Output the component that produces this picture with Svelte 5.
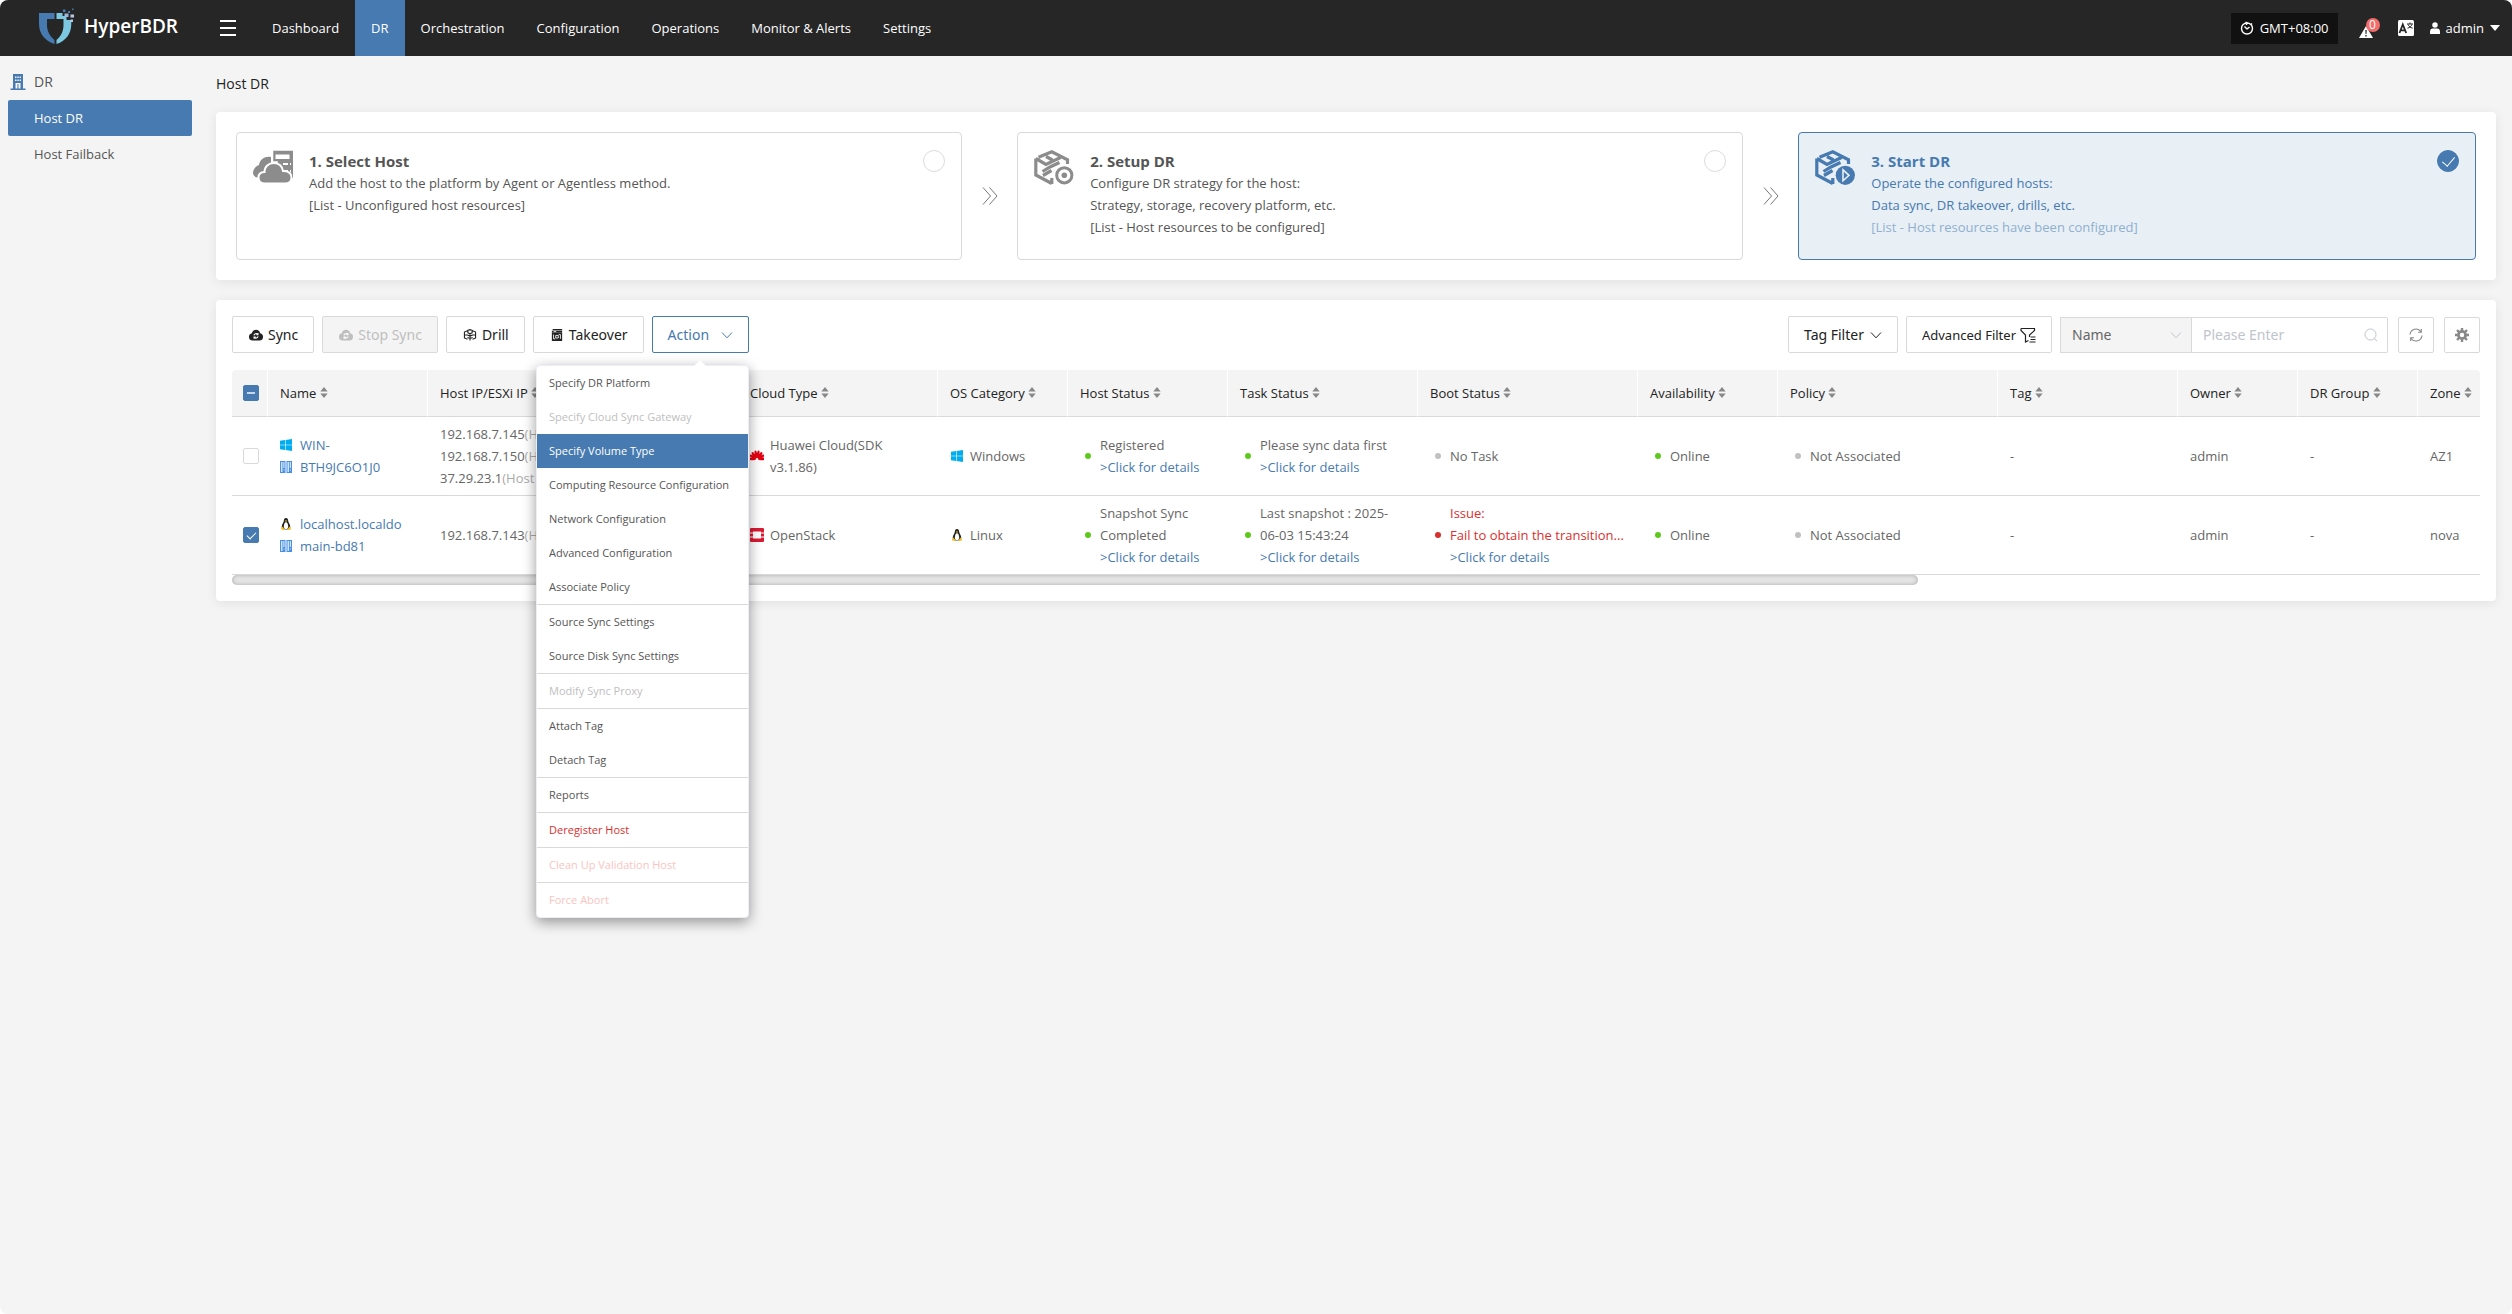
<script lang="ts">
	type Status = { color: string; lines: string[]; link?: boolean; error?: boolean };

	const navItems = [
		'Dashboard',
		'DR',
		'Orchestration',
		'Configuration',
		'Operations',
		'Monitor & Alerts',
		'Settings'
	];
	const sideItems = ['Host DR', 'Host Failback'];

	const steps = [
		{
			title: '1. Select Host',
			icon: 'cloud',
			lines: ['Add the host to the platform by Agent or Agentless method.'],
			list: '[List - Unconfigured host resources]'
		},
		{
			title: '2. Setup DR',
			icon: 'setup',
			lines: ['Configure DR strategy for the host:', 'Strategy, storage, recovery platform, etc.'],
			list: '[List - Host resources to be configured]'
		},
		{
			title: '3. Start DR',
			icon: 'start',
			lines: ['Operate the configured hosts:', 'Data sync, DR takeover, drills, etc.'],
			list: '[List - Host resources have been configured]'
		}
	];

	const menuGroups = [
		[
			{ label: 'Specify DR Platform' },
			{ label: 'Specify Cloud Sync Gateway', disabled: true },
			{ label: 'Specify Volume Type', active: true },
			{ label: 'Computing Resource Configuration' },
			{ label: 'Network Configuration' },
			{ label: 'Advanced Configuration' },
			{ label: 'Associate Policy' }
		],
		[{ label: 'Source Sync Settings' }, { label: 'Source Disk Sync Settings' }],
		[{ label: 'Modify Sync Proxy', disabled: true }],
		[{ label: 'Attach Tag' }, { label: 'Detach Tag' }],
		[{ label: 'Reports' }],
		[{ label: 'Deregister Host', danger: true }],
		[{ label: 'Clean Up Validation Host', danger: true, disabled: true }],
		[{ label: 'Force Abort', danger: true, disabled: true }]
	] as { label: string; disabled?: boolean; active?: boolean; danger?: boolean }[][];

	const columns = [
		{ label: 'Name', cls: 'c-name' },
		{ label: 'Host IP/ESXi IP', cls: 'c-ip' },
		{ label: 'Cloud Type', cls: 'c-cloud' },
		{ label: 'OS Category', cls: 'c-os' },
		{ label: 'Host Status', cls: 'c-host' },
		{ label: 'Task Status', cls: 'c-task' },
		{ label: 'Boot Status', cls: 'c-boot' },
		{ label: 'Availability', cls: 'c-avail' },
		{ label: 'Policy', cls: 'c-policy' },
		{ label: 'Tag', cls: 'c-tag' },
		{ label: 'Owner', cls: 'c-owner' },
		{ label: 'DR Group', cls: 'c-group' },
		{ label: 'Zone', cls: 'c-zone' }
	];

	const petals = [-88, -62, -37, -12, 12, 37, 62, 88];

	let rows = $state([
		{
			checked: false,
			name: ['WIN-', 'BTH9JC6O1J0'],
			ips: ['192.168.7.145', '192.168.7.150', '37.29.23.1'],
			cloud: 'Huawei Cloud(SDK v3.1.86)',
			cloudIcon: 'huawei',
			os: 'Windows',
			status: [
				{ color: 'green', lines: ['Registered'], link: true },
				{ color: 'green', lines: ['Please sync data first'], link: true },
				{ color: 'gray', lines: ['No Task'] },
				{ color: 'green', lines: ['Online'] },
				{ color: 'gray', lines: ['Not Associated'] }
			] as Status[],
			rest: ['-', 'admin', '-', 'AZ1']
		},
		{
			checked: true,
			name: ['localhost.localdo', 'main-bd81'],
			ips: ['192.168.7.143'],
			cloud: 'OpenStack',
			cloudIcon: 'openstack',
			os: 'Linux',
			status: [
				{ color: 'green', lines: ['Snapshot Sync', 'Completed'], link: true },
				{ color: 'green', lines: ['Last snapshot : 2025-', '06-03 15:43:24'], link: true },
				{
					color: 'red',
					lines: ['Issue:', 'Fail to obtain the transition...'],
					link: true,
					error: true
				},
				{ color: 'green', lines: ['Online'] },
				{ color: 'gray', lines: ['Not Associated'] }
			] as Status[],
			rest: ['-', 'admin', '-', 'nova']
		}
	]);

	let step = $state(2);
	let menuOpen = $state(true);
	let keyword = $state('');

	let allChecked = $derived(rows.every((r) => r.checked));
	let someChecked = $derived(rows.some((r) => r.checked) && !allChecked);

	function toggleAll() {
		const next = !allChecked;
		rows.forEach((r) => (r.checked = next));
	}
</script>

{#snippet osIcon(os: string)}
	{#if os === 'Windows'}
		<svg class="os" viewBox="0 0 12 12" fill="#00adef">
			<path d="M0 1.700 5 1v4.700H0zM5.600.9 12 0v5.700H5.600zM0 6.300h5V11l-5-.7zM5.600 6.300H12V12l-6.400-.9z" />
		</svg>
	{:else}
		<svg class="os" viewBox="0 0 12 12">
			<path fill="#222" d="M6 0c1.500 0 2.100 1.100 2.100 2.500C8.200 4.500 10.300 6 10.300 9c0 1.500-1 2.500-4.300 2.500S1.700 10.500 1.700 9c0-3 2.100-4.500 2.200-6.500C3.900 1.100 4.500 0 6 0z" />
			<path fill="#fff" d="M6 4.200c1.200 0 2.200 2 2.200 4.300S7.200 11 6 11s-2.200-.3-2.200-2.500S4.800 4.200 6 4.200z" />
			<path fill="#f5b80f" d="M4.800 2.700 6 2.300l1.200.4L6 3.900zM2.200 8.400l2.500 2.500-.8 1.100L.8 11.200zM9.800 8.400l-2.500 2.500.8 1.100 3.100-.8z" />
		</svg>
	{/if}
{/snippet}

{#snippet cloudSync()}
	<svg class="ico" viewBox="0 0 16 14">
		<path fill="currentColor" d="M8 1a5 5 0 0 1 4.800 4A4.300 4.300 0 0 1 12 13.500H4A4.300 4.300 0 0 1 3.200 5 5 5 0 0 1 8 1z" />
		<path class="hole" fill="none" stroke-width="1.200" d="M5.600 7.500A2.500 2.500 0 0 1 10 6.300M10.400 8.500A2.500 2.500 0 0 1 6 9.700M10.300 4.700v1.900H8.400M5.700 11.300V9.400h1.900" />
	</svg>
{/snippet}

{#snippet chevron()}
	<svg class="chev" viewBox="0 0 12 12">
		<path fill="none" stroke="currentColor" d="M1 3.500 6 8.800l5-5.300" />
	</svg>
{/snippet}

{#snippet cube()}
	<path d="M1.800 8.500V25l16 8.500M1.800 8.500 12 14.500 26.500 7.500M4.500 7.200 17.800 1.800 33.500 9.800V14M12 6.500l6.500 3.500M8.500 21.500 16 17l9.500-4.500M9 25.500l8.500-5M17.800 34v-6" />
{/snippet}

{#snippet statusCell(s: Status)}
	<div class="status" class:error={s.error}>
		<i class="dot {s.color}"></i>
		<div>
			{#each s.lines as line}<div class="line">{line}</div>{/each}
			{#if s.link}<a class="line" href="#details">&gt;Click for details</a>{/if}
		</div>
	</div>
{/snippet}

<div class="app">
	<header>
		<a class="logo" href="#home">
			<svg viewBox="0 0 36 38">
				<path fill="#467ab0" d="M0 6h15.500v6H8v6c0 6 3 11.500 7.500 15v4C6 34 0 26.500 0 17z" />
				<path fill="#7cc8e0" d="M17.500 6h6v3h4v4h4.800v4c0 9.500-5.300 17-14.800 20v-4c4.500-3.500 7-9 7-15v-6h-7z" />
				<path fill="#7cc8e0" d="M25 13h4v3h-4z" />
				<path fill="#9bb6d6" d="M25.500 6.500h4v3.500h-4z" />
				<path fill="#b9cbe2" d="M31.500 7.500H35v3h-3.500zM31.500 12.500h2.500V15h-2.500z" />
				<path fill="#467ab0" d="M24 2.500h2.500V5H24zM29 4h2v2h-2zM33 1.500h1.500V3H33z" />
			</svg>
			<span>HyperBDR</span>
		</a>
		<button class="burger" aria-label="Toggle menu"><i></i><i></i><i></i></button>
		<nav>
			{#each navItems as item}
				<a href="#{item}" class:active={item === 'DR'}>{item}</a>
			{/each}
		</nav>
		<div class="tools">
			<button class="tz">
				<svg viewBox="0 0 14 14" fill="none" stroke="#fff" stroke-width="1.400">
					<circle cx="7" cy="7.500" r="5.500" />
					<path d="M7 8 4.500 5.500M7 8l2.500-2M5.500 1l2 1.200-1.500 1.500M11 2.500l1 1" />
				</svg>
				GMT+08:00
			</button>
			<button class="alert" aria-label="Alerts">
				<svg viewBox="0 0 14 12">
					<path fill="#fff" d="M7 0l7 12H0z" />
					<path fill="#262626" d="M6.300 4h1.400l-.2 4h-1zM6.300 9h1.400v1.400H6.300z" />
				</svg>
				<span class="badge">0</span>
			</button>
			<button class="lang" aria-label="Language">
				<svg viewBox="0 0 16 16">
					<rect width="16" height="16" rx="1.500" fill="#fff" />
					<path fill="none" stroke="#262626" stroke-width="1.800" d="M1.500 13 4.800 4.500 8.200 13M2.800 10.300H7" />
					<path fill="none" stroke="#262626" d="M9 4h6M12 2.500V4M14 4.500c-.8 2-2.500 3-4.500 3.700M10 4.500c.8 2 2.500 3 4.700 3.700" />
				</svg>
			</button>
			<button class="user">
				<svg viewBox="0 0 11 13" fill="#fff">
					<circle cx="5.500" cy="3.200" r="3" />
					<path d="M0 13v-2.500C0 8 1.500 7 3 7h5c1.500 0 3 1 3 3.500V13z" />
				</svg>
				admin
				<i class="caret"></i>
			</button>
		</div>
	</header>

	<div class="body">
		<aside>
			<div class="side-title">
				<svg viewBox="0 0 16 16">
					<path fill="#467ab0" fill-rule="evenodd" d="M3 0h10v14.500h2.500V16H.5v-1.500H3zM5 2.500V4h1.500V2.500zm2.300 0V4h1.500V2.500zm2.300 0V4H11V2.500zM5 5.500V7h1.500V5.500zm2.300 0V7h1.500V5.500zm2.300 0V7H11V5.500zM5.500 9v5.500h2V10h1v4.500h2V9z" />
				</svg>
				DR
			</div>
			{#each sideItems as item, i}
				<a href="#{item}" class:active={i === 0}>{item}</a>
			{/each}
		</aside>

		<main>
			<h1>Host DR</h1>

			<section class="panel steps">
				{#each steps as s, i}
					{#if i > 0}
						<svg class="next" viewBox="0 0 16 18" fill="none" stroke="#777">
							<path d="M1 .5 8.500 9 1 17.500M7.500.5 15 9l-7.500 8.500" />
						</svg>
					{/if}
					<label class="step" class:selected={step === i}>
						{#if s.icon === 'cloud'}
							<svg class="step-icon" viewBox="0 0 40 36">
								<path fill="#8c8c8c" d="M18 7c-6-1-11 2-12 8-4 1.500-6 5-6 8 0 2 1.500 4 4.500 4.500L18 20z" />
								<path fill="#8c8c8c" stroke="#fff" stroke-width="1.500" d="M19.500 0H42v29H30l-6-8V12h-4.500z" />
								<path fill="#fff" d="M22.500 4.500h14V9h-14zM30 13h8v2h-8zM30 20h8v2h-8z" />
								<path fill="#8c8c8c" d="M35 13h2v2h-2zM35 20h2v2h-2z" />
								<path fill="#8c8c8c" stroke="#fff" stroke-width="2" d="M21 13c5 0 8.500 3.500 9 8 4.500 0 8.500 1.500 8.500 6.500 0 4-3 6-6.500 6H12c-3.500 0-6.500-2-6.500-6 0-3.500 2.500-5.500 6-5.500 0-5.500 4-9 9.500-9z" />
							</svg>
						{:else}
							<svg class="step-icon" viewBox="0 0 40 36">
								<g fill="none" stroke={s.icon === 'start' ? '#467ab0' : '#8c8c8c'} stroke-width="3.200">
									{@render cube()}
								</g>
								{#if s.icon === 'start'}
									<circle cx="30.300" cy="25.300" r="11" fill="#e8eff5" />
									<circle cx="30.300" cy="25.300" r="9.600" fill="#467ab0" />
									<path fill="none" stroke="#e8eff5" stroke-width="1.600" d="M28 19.800v11l6-5.500z" />
								{:else}
									<circle cx="30.300" cy="25.300" r="11" fill="#fff" />
									<circle cx="30.300" cy="25.300" r="7.600" fill="none" stroke="#8c8c8c" stroke-width="3" />
									<circle cx="30.300" cy="25.300" r="2.800" fill="#8c8c8c" />
								{/if}
							</svg>
						{/if}
						<span class="step-text">
							<strong>{s.title}</strong>
							{#each s.lines as line}<span>{line}</span>{/each}
							<span class="list">{s.list}</span>
						</span>
						<input type="radio" name="step" value={i} bind:group={step} />
					</label>
				{/each}
			</section>

			<section class="panel list-panel">
				<div class="toolbar">
					<button class="btn">{@render cloudSync()}Sync</button>
					<button class="btn" disabled>{@render cloudSync()}Stop Sync</button>
					<button class="btn">
						<svg class="ico" viewBox="0 0 16 14" fill="none" stroke="currentColor" stroke-width="1.300">
							<path d="M5 2 1.500 3.500v7L5 12M11 2l3.500 1.500v7L11 12M5.500 1.500 8 .7l2.500.8v3L8 5.500 5.500 4.500zM5 7l3 1.200L11 7M5 10l3 1 3-1M8 5.500V13.300M1.500 7H5M11 7h3.500" />
						</svg>Drill
					</button>
					<button class="btn">
						<svg class="ico" viewBox="0 0 16 14">
							<path fill="currentColor" d="M3 0h11v1.500H3zM2 2h12v2H2zM2 4.500h12V14H2z" />
							<path fill="none" stroke="#fff" d="M4 6.500v5h2M12 11.500v-5h-2M6.500 7.500h3v3h-3zM4 3h3" />
						</svg>Takeover
					</button>
					<div class="dropdown">
						<button class="btn primary" aria-expanded={menuOpen} onclick={() => (menuOpen = !menuOpen)}>
							Action {@render chevron()}
						</button>
						{#if menuOpen}
							<div class="menu" role="menu">
								{#each menuGroups as group}
									<div class="group">
										{#each group as item}
											<button
												role="menuitem"
												class:active={item.active}
												class:danger={item.danger}
												disabled={item.disabled}>{item.label}</button
											>
										{/each}
									</div>
								{/each}
							</div>
						{/if}
					</div>

					<div class="filters">
						<button class="btn">Tag Filter {@render chevron()}</button>
						<button class="btn adv">
							Advanced Filter
							<svg class="funnel" viewBox="0 0 16 16" fill="none" stroke="currentColor" stroke-width="1.200">
								<path d="M1 1.500h13.500v2L9.500 8v2M1 1.500v2L5.500 8v7l3-1.500M10.500 10h5M10.500 12.500h5M9.500 15h6" />
							</svg>
						</button>
						<div class="search">
							<div class="select">
								<select aria-label="Search field"><option>Name</option></select>
								{@render chevron()}
							</div>
							<div class="input">
								<input type="text" placeholder="Please Enter" aria-label="Keyword" bind:value={keyword} />
								<svg viewBox="0 0 14 14" fill="none" stroke="#c0c4cc">
									<circle cx="6.500" cy="6.500" r="5.500" />
									<path d="m10 10.500 3 2.500" />
								</svg>
							</div>
						</div>
						<button class="btn square" aria-label="Refresh">
							<svg viewBox="0 0 14 14" fill="none" stroke="#888" stroke-width="1.100">
								<path d="M1 6.500A6 6 0 0 1 12 3.800M13 7.500A6 6 0 0 1 2 10.200M12.300 1v3.200H9M1.700 13V9.800H5" />
							</svg>
						</button>
						<button class="btn square" aria-label="Column settings">
							<svg viewBox="0 0 14 14">
								<circle cx="7" cy="7" r="3.600" fill="none" stroke="#888" stroke-width="2.800" />
								<path stroke="#888" stroke-width="2.400" d="M7 0v2.500M7 11.500V14M0 7h2.500M11.500 7H14M2 2l2 2M10 10l2 2M2 12l2-2M10 4l2-2" />
							</svg>
						</button>
					</div>
				</div>

				<div class="table-wrap">
					<table>
						<colgroup>
							<col class="c-check" />
							{#each columns as c}<col class={c.cls} />{/each}
						</colgroup>
						<thead>
							<tr>
								<th class="check">
									<input
										type="checkbox"
										aria-label="Select all"
										checked={allChecked}
										indeterminate={someChecked}
										onchange={toggleAll}
									/>
								</th>
								{#each columns as c}
									<th>
										{c.label}
										<svg class="sort" viewBox="0 0 8 12" fill="#888">
											<path d="M4 0l4 5H0zM0 7h8l-4 5z" />
										</svg>
									</th>
								{/each}
							</tr>
						</thead>
						<tbody>
							{#each rows as row}
								<tr>
									<td class="check">
										<input type="checkbox" aria-label="Select {row.name.join('')}" bind:checked={row.checked} />
									</td>
									<td>
										<div class="host">
											<span class="host-icons">
												{@render osIcon(row.os)}
												<svg class="os" viewBox="0 0 12 12">
													<path fill="#4a90e2" d="M0 0h5.500v12H0zM6.500 0H12v12H6.500z" />
													<path fill="#cfe3fa" d="M1 1h1.500v10H1zM3.300 1h1.200v6H3.300zM7.500 1H9v10H7.500zM9.800 1H11v6H9.800zM3.500 8.500h1v1h-1zM10 8.500h1v1h-1z" />
												</svg>
											</span>
											<a href="#host">{row.name[0]}<br />{row.name[1]}</a>
										</div>
									</td>
									<td>
										{#each row.ips as ip}<div class="line">{ip}<span class="muted">(Host IP)</span></div>{/each}
									</td>
									<td>
										<div class="with-icon">
											{#if row.cloudIcon === 'huawei'}
												<svg viewBox="0 0 14 14" fill="#e60012">
													{#each petals as angle}
														<ellipse cx="7" cy="5.200" rx="1.300" ry="3.800" transform="rotate({angle} 7 10)" />
													{/each}
												</svg>
											{:else}
												<svg viewBox="0 0 14 14">
													<path fill="#da1a32" fill-rule="evenodd" d="M1 0h12q1 0 1 1v3.500h-3V3.500H3v1H0V1q0-1 1-1zM0 5.500h3v3H0zM11 5.500h3v3h-3zM0 9.500h3v1h8v-1h3V13q0 1-1 1H1q-1 0-1-1z" />
													<path fill="#ee8a97" d="M0 4.500h3v1H0zM11 4.500h3v1h-3zM0 8.500h3v1H0zM11 8.500h3v1h-3z" />
												</svg>
											{/if}
											<span>{row.cloud}</span>
										</div>
									</td>
									<td>
										<div class="with-icon">{@render osIcon(row.os)}<span>{row.os}</span></div>
									</td>
									{#each row.status as s}<td>{@render statusCell(s)}</td>{/each}
									{#each row.rest as text}<td>{text}</td>{/each}
								</tr>
							{/each}
						</tbody>
					</table>
				</div>
				<div class="scroll"><i></i></div>
			</section>
		</main>
	</div>
</div>

<style>
	:global(body) {
		background: #fff;
	}
	.app {
		--blue: #467ab0;
		--border: #d9d9d9;
		min-height: 100vh;
		background: #f4f4f4;
		border-radius: 8px;
		overflow: hidden;
		font: 13px/22px 'Segoe UI', 'Open Sans', 'Noto Sans', sans-serif;
		color: #555;
	}
	.app * {
		box-sizing: border-box;
	}
	button,
	input,
	select {
		font: inherit;
		color: inherit;
	}
	button {
		background: none;
		border: 0;
		padding: 0;
		white-space: nowrap;
		cursor: pointer;
	}
	button:disabled {
		cursor: not-allowed;
	}
	a {
		color: var(--blue);
		text-decoration: none;
	}
	svg {
		flex: none;
	}

	header {
		display: flex;
		height: 56px;
		background: #262626;
		color: #fff;
	}
	.logo {
		display: flex;
		align-items: center;
		gap: 9px;
		width: 181px;
		padding: 0 0 4px 39px;
		font-size: 19px;
		font-weight: 600;
		color: #fff;
	}
	.logo svg {
		width: 36px;
		height: 38px;
	}
	.burger {
		display: flex;
		flex-direction: column;
		justify-content: center;
		gap: 5px;
		width: 16px;
		margin: 0 20px 0 39px;
	}
	.burger i {
		width: 16px;
		height: 2px;
		background: #fff;
	}
	nav {
		display: flex;
	}
	nav a {
		padding: 0 16px;
		line-height: 56px;
		color: #fff;
	}
	nav a.active {
		background: var(--blue);
	}
	.tools {
		display: flex;
		align-items: center;
		margin-left: auto;
		padding-right: 12px;
	}
	.tz {
		display: flex;
		align-items: center;
		gap: 6px;
		height: 31px;
		padding: 0 9px;
		background: #111;
	}
	.tz svg {
		width: 14px;
		height: 14px;
	}
	.alert {
		position: relative;
		display: flex;
		margin: 8px 25px 0 21px;
	}
	.alert svg {
		width: 14px;
		height: 12px;
	}
	.badge {
		position: absolute;
		right: -7px;
		bottom: 6px;
		width: 14px;
		height: 14px;
		border-radius: 50%;
		background: #f56c6c;
		font-size: 12px;
		line-height: 14px;
		text-align: center;
	}
	.lang svg {
		display: block;
		width: 16px;
		height: 16px;
	}
	.user {
		display: flex;
		align-items: center;
		gap: 6px;
		margin-left: 16px;
	}
	.user svg {
		width: 10px;
		height: 12px;
	}
	.caret {
		border: 5px solid transparent;
		border-top: 6px solid #fff;
		border-bottom: 0;
	}

	.body {
		display: flex;
	}
	aside {
		display: flex;
		flex-direction: column;
		width: 200px;
		padding: 8px 8px 0;
	}
	.side-title {
		display: flex;
		align-items: center;
		gap: 8px;
		height: 36px;
		padding-left: 2px;
		font-size: 14px;
	}
	.side-title svg {
		width: 16px;
		height: 16px;
	}
	aside a {
		padding-left: 26px;
		border-radius: 2px;
		line-height: 36px;
		color: #555;
	}
	aside a.active {
		background: var(--blue);
		color: #fff;
	}

	main {
		flex: 1;
		min-width: 0;
		padding: 0 16px;
	}
	h1 {
		margin: 0;
		font-size: 14px;
		font-weight: 400;
		line-height: 56px;
		color: #222;
	}
	.panel {
		border-radius: 4px;
		background: #fff;
		box-shadow: 0 2px 12px rgba(0, 0, 0, 0.08);
	}
	.steps {
		display: grid;
		grid-template-columns: 15fr 55px 15fr 55px 14fr;
		align-items: center;
		margin-bottom: 20px;
		padding: 20px;
	}
	.next {
		width: 16px;
		height: 18px;
		justify-self: center;
	}
	.step {
		display: flex;
		height: 128px;
		padding: 17px 16px 0;
		border: 1px solid var(--border);
		border-radius: 4px;
		cursor: pointer;
	}
	.step-icon {
		width: 40px;
		height: 36px;
	}
	.step-text {
		display: flex;
		flex: 1;
		flex-direction: column;
		padding-left: 16px;
	}
	.step-text strong {
		font-size: 15px;
	}
	.step.selected {
		border-color: var(--blue);
		background: #e8eff5;
		color: var(--blue);
	}
	.selected .list {
		color: #8fb0d0;
	}
	.step input {
		display: grid;
		place-items: center;
		appearance: none;
		width: 22px;
		height: 22px;
		margin: 0;
		border: 1px solid #dcdcdc;
		border-radius: 50%;
		background: #fff;
	}
	.step input:checked {
		border-color: var(--blue);
		background: var(--blue);
	}
	.step input:checked::after {
		content: '';
		width: 6px;
		height: 11px;
		margin-bottom: 3px;
		border: solid #fff;
		border-width: 0 1px 1px 0;
		transform: rotate(40deg);
	}

	.list-panel {
		padding: 16px;
	}
	.toolbar {
		display: flex;
		align-items: center;
		gap: 8px;
		margin-bottom: 17px;
	}
	.btn {
		display: flex;
		align-items: center;
		height: 37px;
		padding: 0 15px;
		border: 1px solid var(--border);
		border-radius: 2px;
		background: #fff;
		font-family: 'Noto Sans', sans-serif;
		font-size: 14px;
		color: #222;
	}
	.btn:disabled {
		background: #f4f4f4;
		color: #bfbfbf;
	}
	.hole {
		stroke: #fff;
	}
	.btn.primary {
		border-color: var(--blue);
		color: var(--blue);
	}
	.ico {
		width: 16px;
		height: 12px;
		margin-right: 4px;
	}
	.chev {
		width: 12px;
		height: 12px;
	}
	.primary .chev {
		margin-left: 12px;
	}
	.dropdown {
		position: relative;
	}
	.menu {
		position: absolute;
		z-index: 5;
		top: 49px;
		right: 0;
		width: 213px;
		border: 1px solid #ebeef5;
		border-radius: 4px;
		background: #fff;
		box-shadow: 0 4px 14px rgba(0, 0, 0, 0.4);
	}
	.menu::before {
		content: '';
		position: absolute;
		top: -6px;
		right: 42px;
		border: 6px solid transparent;
		border-top: 0;
		border-bottom-color: #fff;
	}
	.group + .group {
		border-top: 1px solid var(--border);
	}
	.menu button {
		display: block;
		width: 100%;
		height: 34px;
		padding-left: 12px;
		font-size: 11px;
		text-align: left;
	}
	.menu button:disabled {
		color: #c0c0c0;
	}
	.menu button.active {
		background: var(--blue);
		color: #fff;
	}
	.menu button.danger {
		color: #d9302f;
	}
	.menu button.danger:disabled {
		color: #fbc4bf;
	}

	.filters {
		display: flex;
		align-items: center;
		gap: 8px;
		margin-left: auto;
	}
	.filters .chev {
		margin-left: 6px;
	}
	.btn.adv {
		font-size: 13px;
	}
	.funnel {
		width: 16px;
		height: 16px;
		margin-left: 4px;
	}
	.search {
		display: flex;
		height: 36px;
		font-family: 'Noto Sans', sans-serif;
		font-size: 14px;
	}
	.select,
	.input {
		position: relative;
		display: flex;
		align-items: center;
		border: 1px solid var(--border);
	}
	.select {
		width: 132px;
		background: #f4f4f4;
		color: #666;
	}
	.input {
		width: 196px;
		border-left: 0;
		border-radius: 0 2px 2px 0;
	}
	select,
	.input input {
		appearance: none;
		width: 100%;
		height: 34px;
		padding: 0 11px;
		border: 0;
		outline: 0;
		background: none;
	}
	.input input::placeholder {
		color: #c0c4cc;
	}
	.select svg,
	.input svg {
		position: absolute;
		right: 9px;
		color: #c0c4cc;
		pointer-events: none;
	}
	.input svg {
		width: 14px;
		height: 14px;
	}
	.btn.square {
		justify-content: center;
		width: 36px;
		height: 36px;
		margin-left: 2px;
		padding: 0;
	}
	.square svg {
		width: 14px;
		height: 14px;
	}

	.table-wrap {
		overflow: hidden;
		border-radius: 4px 4px 0 0;
	}
	table {
		width: 2987px;
		table-layout: fixed;
		border-collapse: separate;
		border-spacing: 0;
	}
	.c-check {
		width: 36px;
	}
	.c-name,
	.c-host {
		width: 160px;
	}
	.c-ip {
		width: 310px;
	}
	.c-cloud {
		width: 200px;
	}
	.c-os {
		width: 130px;
	}
	.c-task {
		width: 190px;
	}
	.c-boot,
	.c-policy {
		width: 220px;
	}
	.c-avail {
		width: 140px;
	}
	.c-tag {
		width: 180px;
	}
	.c-owner,
	.c-group {
		width: 120px;
	}
	th,
	td {
		padding: 0 12px;
		border-bottom: 1px solid var(--border);
		text-align: left;
		white-space: nowrap;
	}
	th {
		height: 47px;
		border-right: 1px solid #fff;
		background: #f4f4f4;
		font-weight: 400;
		color: #222;
	}
	td {
		height: 79px;
		color: #666;
	}
	th.check,
	td.check {
		padding: 0 0 0 11px;
	}
	.check input {
		display: grid;
		place-items: center;
		appearance: none;
		width: 16px;
		height: 16px;
		margin: 0;
		border: 1px solid var(--border);
		border-radius: 2px;
		background: #fff;
	}
	.check input:checked,
	.check input:indeterminate {
		border-color: var(--blue);
		background: var(--blue);
	}
	.check input:checked::after {
		content: '';
		width: 4px;
		height: 8px;
		margin-bottom: 2px;
		border: solid #fff;
		border-width: 0 1px 1px 0;
		transform: rotate(45deg);
	}
	.check input:indeterminate::after {
		content: '';
		width: 8px;
		height: 2px;
		background: #c8d7e7;
	}
	.sort {
		width: 8px;
		height: 11px;
	}
	.host,
	.with-icon,
	.status {
		display: flex;
		align-items: center;
	}
	.host {
		gap: 8px;
	}
	.host-icons {
		display: flex;
		flex-direction: column;
		gap: 10px;
	}
	.os {
		width: 12px;
		height: 12px;
	}
	.with-icon {
		gap: 6px;
		white-space: normal;
	}
	.with-icon svg {
		width: 14px;
		height: 14px;
	}
	.with-icon .os {
		height: 12px;
	}
	.with-icon span {
		max-width: 130px;
	}
	.line {
		display: block;
	}
	.muted {
		color: #aaa;
	}
	.status {
		gap: 9px;
		padding-left: 5px;
	}
	.status.error .line:not(a) {
		color: #d9302f;
	}
	.dot {
		width: 6px;
		height: 6px;
		border-radius: 50%;
		background: #c0c0c0;
	}
	.dot.green {
		background: #5ec91c;
	}
	.dot.red {
		background: #d9302f;
	}
	.scroll i {
		display: block;
		width: 75%;
		height: 10px;
		border-radius: 5px;
		background: #e5e5e5;
		box-shadow: inset 0 0 4px #aaa;
	}
</style>
